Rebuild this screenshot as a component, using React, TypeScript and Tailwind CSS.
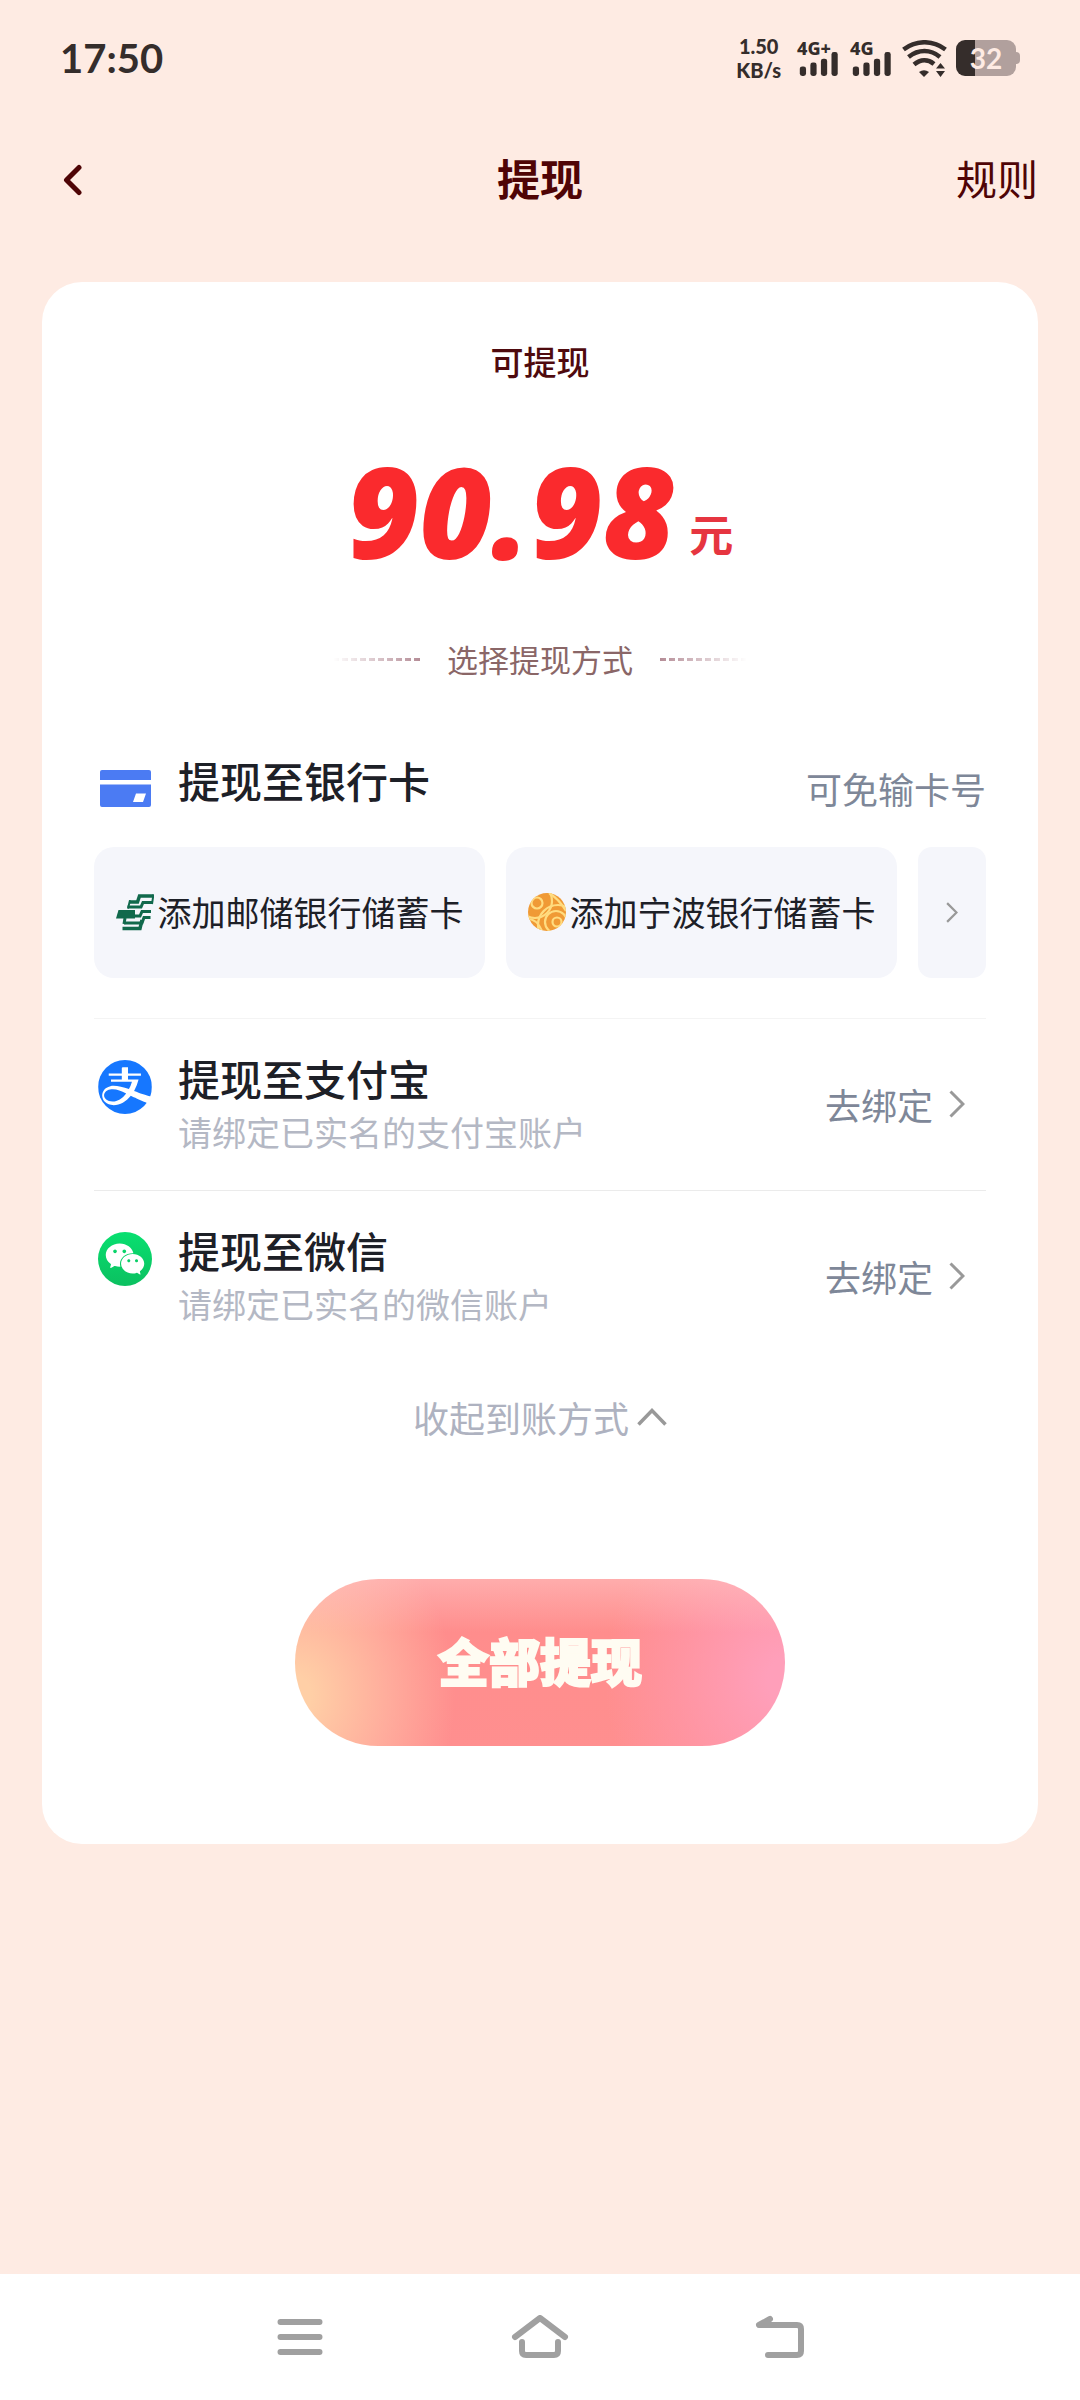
import { AiFillWechat } from 'react-icons/ai'
import { SiAlipay } from 'react-icons/si'

function Signal({ label }: { label: string }) {
    return (
        <div className="w-10 h-9 flex flex-col justify-between">
            <span className="font-['Noto_Sans'] text-[18px] leading-4 font-extrabold whitespace-nowrap">{label}</span>
            <svg viewBox="0 0 40 25" className="-mt-1 w-10 h-[25px] ml-0.5 fill-current">
                <rect x="0" y="15" width="6.5" height="10" rx="2.5" />
                <rect x="11" y="11" width="6.5" height="14" rx="2.5" />
                <rect x="22" y="7" width="6.5" height="18" rx="2.5" />
                <rect x="33" y="0" width="6.5" height="25" rx="2.5" />
            </svg>
        </div>
    )
}

function Wifi() {
    return (
        <svg viewBox="0 0 46 37" className="w-[46px] h-[37px] ml-3" fill="none" stroke="currentColor" strokeWidth="4.5">
            <path d="M1.5 9.5C14-.2 31-.2 43.500 9.500" />
            <path d="M6.500 17C16.500 9 28.500 9 38 17" />
            <path d="M12 24.500C18.500 19 26 19 32 24" />
            <path d="M17 32Q22 28.500 27 32L22 37Z" fill="currentColor" stroke="none" />
            <path d="M34 28.500L38.500 23L43 28.500ZM34 31H43L38.500 37Z" fill="currentColor" stroke="none" />
        </svg>
    )
}

function Battery() {
    return (
        <div className="flex items-center ml-2">
            <div className="w-[60px] h-9 rounded-[9px] flex items-center justify-center bg-[linear-gradient(90deg,#352d2b_0_19px,#b1a09d_19px)] text-[#feebe3] text-[28px] leading-9 font-bold">
                32
            </div>
            <div className="w-1 h-3 rounded-r-sm bg-[#b1a09d]" />
        </div>
    )
}

function StatusBar() {
    return (
        <div className="h-[116px] px-[60px] flex items-center justify-between text-[#352d2b] font-['Lato']">
            <span className="text-[40px] leading-[48px] font-bold">17:50</span>
            <div className="flex items-center">
                <div className="mr-4 text-center font-black text-[20px] leading-6 flex flex-col items-center">
                    <span>1.50</span>
                    <span>KB/s</span>
                </div>
                <div className="flex gap-[13px]">
                    <Signal label="4G+" />
                    <Signal label="4G" />
                </div>
                <Wifi />
                <Battery />
            </div>
        </div>
    )
}

function Chevron({ className }: { className: string }) {
    return (
        <svg viewBox="0 0 16 28" className={className} fill="none" stroke="currentColor" strokeWidth="3">
            <path d="M1.500 1.500L14 14L1.500 26.500" />
        </svg>
    )
}

function CardIcon() {
    return (
        <svg viewBox="0 0 51 37" className="w-[51px] h-[37px] ml-0.5" fill="#4b7bf3">
            <path d="M2 0H49Q51 0 51 2V10H0V2Q0 0 2 0Z" />
            <path d="M0 14.500H51V35Q51 37 49 37H2Q0 37 0 35ZM36 23.500L33 32H43L46 23.500Z" fillRule="evenodd" />
        </svg>
    )
}

function PostBankIcon() {
    return (
        <svg viewBox="0 0 38 38" className="w-[38px] h-[38px]" fill="none" stroke="#11694c">
            <path d="M37.500 3H23.500L21.500 9H13" strokeWidth="3.500" />
            <path d="M36.500 9.500H27L25 14H11.500" strokeWidth="3" />
            <path d="M14 7.300L12 15.500M37.500 1.300L36 11" strokeWidth="2" />
            <path d="M2.500 17H19V25.500H0Z" fill="#11694c" stroke="none" />
            <path d="M35 18.500H26L24 23H17M34.500 24.500H28L26 30H8" strokeWidth="3" />
            <path d="M9 25L8 31" strokeWidth="3" />
            <path d="M26 27L24 35.500H6.500" strokeWidth="3.500" />
        </svg>
    )
}

function NingboIcon() {
    return (
        <svg viewBox="0 0 38 38" className="w-[38px] h-[38px]" fill="none" stroke="#ffdc80" strokeWidth="2.2">
            <clipPath id="ball">
                <circle cx="19" cy="19" r="19" />
            </clipPath>
            <circle cx="19" cy="19" r="19" fill="#f09a35" stroke="none" />
            <g clipPath="url(#ball)">
                <circle cx="29" cy="29" r="4.500" />
                <circle cx="28" cy="29" r="11" />
                <circle cx="30" cy="32" r="20" />
                <circle cx="9" cy="10" r="5.500" />
                <circle cx="7" cy="8" r="17" />
                <path d="M0 26Q9 26 14 38M21 0Q31 6 38 18" />
            </g>
        </svg>
    )
}

function BankChip({ icon, label }: { icon: React.ReactNode; label: string }) {
    return (
        <button className="flex-1 h-full pb-0.5 rounded-[20px] bg-[#f5f6fb] flex items-center justify-center gap-1 text-[34px] leading-[48px] whitespace-nowrap">
            {icon}
            {label}
        </button>
    )
}

function PayMethod({ icon, title, desc }: { icon: React.ReactNode; title: string; desc: string }) {
    return (
        <div className="h-[172px] pb-0.5 border-b border-[#ebebeb] last:border-transparent flex items-center justify-between">
            <div className="flex items-start">
                <div className="mt-[10px] ml-1 mr-[26px]">{icon}</div>
                <div>
                    <h2 className="text-[42px] leading-[56px] font-medium">{title}</h2>
                    <p className="text-[34px] leading-[52px] text-[#b4b8c4]">{desc}</p>
                </div>
            </div>
            <button className="pr-[21px] flex items-center gap-4 text-[36px] leading-[52px] text-[#7e8798]">
                去绑定
                <Chevron className="w-4 h-7 text-[#999]" />
            </button>
        </div>
    )
}

function NavBar() {
    return (
        <nav className="h-[126px] bg-white flex items-center justify-center gap-[180px] text-[#a0a0a0]">
            <button aria-label="菜单">
                <svg viewBox="0 0 60 44" className="w-[60px] h-11" fill="none" stroke="currentColor" strokeWidth="6" strokeLinecap="round">
                    <path d="M10.500 7H49.500M10.500 22H49.500M10.500 37H49.500" />
                </svg>
            </button>
            <button aria-label="主页">
                <svg viewBox="0 0 60 44" className="w-[60px] h-11" fill="none" stroke="currentColor" strokeWidth="6" strokeLinecap="round" strokeLinejoin="round">
                    <path d="M5 22L30 3L55 22M12 27V36Q12 40 16 40H44Q48 40 48 36V27" />
                </svg>
            </button>
            <button aria-label="返回">
                <svg viewBox="0 0 60 44" className="w-[60px] h-11" fill="none" stroke="currentColor" strokeWidth="6" strokeLinecap="round" strokeLinejoin="round">
                    <path d="M20 4L9 10H47Q51 10 51 14V36Q51 40 47 40H18" />
                </svg>
            </button>
        </nav>
    )
}

export default function App() {
    return (
        <div className="min-h-screen flex flex-col bg-[#feebe3] font-['Noto_Sans_CJK_SC',sans-serif] text-[#1d2027]">
            <StatusBar />
            <header className="h-32 px-[42px] grid grid-cols-3 items-center text-[#4f0406]">
                <button aria-label="返回" className="pl-[21px] justify-self-start">
                    <svg viewBox="0 0 20 32" className="w-5 h-8" fill="none" stroke="currentColor" strokeWidth="5" strokeLinecap="round" strokeLinejoin="round">
                        <path d="M16 3.500L3.500 16L16 28.500" />
                    </svg>
                </button>
                <h1 className="pb-1.5 text-center text-[43px] leading-[56px] font-bold">提现</h1>
                <a href="#rules" className="pb-1.5 justify-self-end text-[41px] leading-[56px]">规则</a>
            </header>

            <main className="flex-1 px-[42px] pt-[38px] pb-10">
                <section className="bg-white rounded-[40px] px-[52px] pt-[55px] pb-[98px] flex flex-col">
                    <p className="text-center text-[33px] leading-[48px] font-medium text-[#4f0a0e]">可提现</p>
                    <div className="mt-[66px] h-[120px] flex items-end justify-center gap-[14px]">
                        <span className="font-['Noto_Sans'] italic font-black text-[125px] leading-[120px] text-[#fa2a2d]">90.98</span>
                        <span className="pb-2.5 text-[44px] leading-[56px] font-bold text-[#e63540]">元</span>
                    </div>
                    <div className="mt-16 flex items-center justify-center gap-[27px] text-[31px] leading-[48px] text-[#8a6667]">
                        <div className="w-[87px] h-[3px] bg-[repeating-linear-gradient(90deg,#b58d97_0_6px,transparent_6px_9px)] [mask-image:linear-gradient(to_left,black,transparent)]" />
                        选择提现方式
                        <div className="w-[87px] h-[3px] bg-[repeating-linear-gradient(90deg,#b58d97_0_6px,transparent_6px_9px)] [mask-image:linear-gradient(to_right,black,transparent)]" />
                    </div>

                    <div className="mt-[69px] h-[72px] pl-1 flex items-center">
                        <CardIcon />
                        <h2 className="ml-[27px] self-start text-[42px] leading-[56px] font-medium">提现至银行卡</h2>
                        <span className="ml-auto text-[36px] leading-[52px] text-[#7e8798]">可免输卡号</span>
                    </div>
                    <div className="mt-[23px] h-[131px] flex gap-[21px]">
                        <BankChip icon={<PostBankIcon />} label="添加邮储银行储蓄卡" />
                        <BankChip icon={<NingboIcon />} label="添加宁波银行储蓄卡" />
                        <button aria-label="更多银行" className="w-[68px] rounded-[14px] bg-[#f5f6fb] flex items-center justify-center">
                            <Chevron className="w-3 h-[21px] text-[#999]" />
                        </button>
                    </div>

                    <div className="mt-10 border-t border-[#f4f4f4]">
                        <PayMethod
                            icon={
                                <div className="size-[54px] rounded-full overflow-hidden bg-white">
                                    <SiAlipay className="size-full text-[#1677ff]" />
                                </div>
                            }
                            title="提现至支付宝"
                            desc="请绑定已实名的支付宝账户"
                        />
                        <PayMethod
                            icon={
                                <div className="size-[54px] rounded-full bg-linear-to-b from-[#08e070] to-[#0bc060] flex items-center justify-center">
                                    <AiFillWechat className="size-11 text-white" />
                                </div>
                            }
                            title="提现至微信"
                            desc="请绑定已实名的微信账户"
                        />
                    </div>

                    <button className="mt-[26px] self-center flex items-center gap-2 text-[36px] leading-[56px] text-[#aeb2c0]">
                        收起到账方式
                        <svg viewBox="0 0 30 18" className="w-[30px] h-[18px] text-[#999]" fill="none" stroke="currentColor" strokeWidth="3.5">
                            <path d="M1.500 16.500L15 2.500L28.500 16.500" />
                        </svg>
                    </button>

                    <button className="mt-[134px] pb-1.5 self-center w-[490px] h-[167px] rounded-full bg-[linear-gradient(180deg,rgba(255,205,205,0.5),rgba(255,180,180,0)_32%),radial-gradient(ellipse_160px_190px_at_0%_70%,#ffcfa6_10%,rgba(255,190,165,0.6)_60%,rgba(255,140,139,0)),radial-gradient(ellipse_180px_200px_at_100%_60%,#ff9fba_10%,rgba(255,155,180,0.5)_60%,rgba(255,140,139,0)),linear-gradient(#ff8c8b,#ff8f8f)]">
                        <span className="text-[51px] leading-[60px] font-black text-[#fffcf2] [-webkit-text-stroke:2px_#fffcf2]">
                            全部提现
                        </span>
                    </button>
                </section>
            </main>
            <NavBar />
        </div>
    )
}
